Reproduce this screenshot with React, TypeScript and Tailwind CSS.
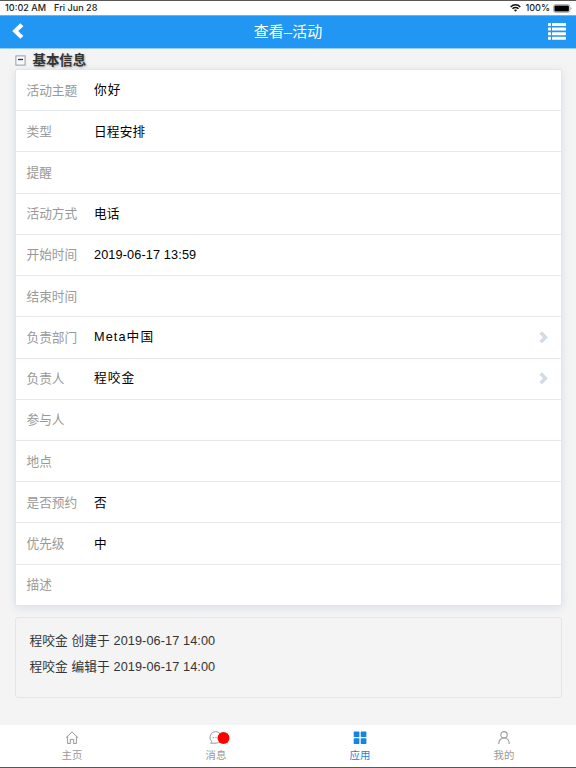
import clsx from 'clsx'
import { FC, ReactNode } from 'react'

type Field = {
  label: string
  value?: string
  spaced?: boolean
  link?: boolean
}

const fields: Field[] = [
  { label: '活动主题', value: '你好', spaced: true },
  { label: '类型', value: '日程安排' },
  { label: '提醒' },
  { label: '活动方式', value: '电话' },
  { label: '开始时间', value: '2019-06-17 13:59' },
  { label: '结束时间' },
  { label: '负责部门', value: 'Meta中国', spaced: true, link: true },
  { label: '负责人', value: '程咬金', spaced: true, link: true },
  { label: '参与人' },
  { label: '地点' },
  { label: '是否预约', value: '否' },
  { label: '优先级', value: '中' },
  { label: '描述' },
]

const StatusBar: FC = () => (
  <div className="flex h-[15px] shrink-0 items-center justify-between border-t border-[#58585a] bg-white pr-[4px] pl-[5px] font-['Inter',sans-serif] text-[9.1px] leading-none font-medium text-[#1c1c1c]">
    <div className="flex gap-[8px]">
      <span>10:02 AM</span>
      <span>Fri Jun 28</span>
    </div>
    <div className="flex items-center">
      <svg className="mr-[4px] h-[8px] w-[11px]" viewBox="0 0 11 8" fill="none" stroke="#111" strokeWidth="1.5">
        <path d="M.7 2.9C3.4.1 7.6.1 10.3 2.9M2.5 4.8c1.7-1.7 4.3-1.7 6 0" />
        <path d="M3.9 6.1c.9-.9 2.3-.9 3.2 0L5.5 7.8z" fill="#111" stroke="none" />
      </svg>
      <span className="mr-[3px]">100%</span>
      <svg className="h-[9px] w-[19px]" viewBox="0 0 19 9">
        <rect x=".5" y=".5" width="16.3" height="8" rx="2" fill="#fff" stroke="#a3a3a3" strokeWidth=".8" />
        <rect x="1.4" y="1.4" width="14.5" height="6.2" rx="1" fill="#000" />
        <path d="M17.6 3v3c1.2-.5 1.2-2.5 0-3z" fill="#999" />
      </svg>
    </div>
  </div>
)

const Header: FC = () => (
  <div className="flex h-[34px] shrink-0 items-center justify-between border-t border-b border-t-[#67b5f7] border-b-[#9ccdf8] bg-[#2196f3] pr-[10px] pl-[12px] text-white">
    <svg className="h-[16px] w-[18px] -translate-y-px" viewBox="0 0 18 16">
      <path d="M8.3.3 11.4 3.2 6.2 8l5.2 4.9-3.1 2.8L.3 8z" fill="#fff" />
    </svg>
    <span className="-translate-x-px text-[15px]">查看–活动</span>
    <svg className="h-[17px] w-[18px] -translate-y-px" viewBox="0 0 18 17" fill="#fff">
      {[0, 4.6, 9.2, 13.8].map((y) => (
        <g key={y}>
          <rect x="0" y={y} width="3" height="3" rx=".5" />
          <rect x="4" y={y} width="14" height="3" rx=".5" />
        </g>
      ))}
    </svg>
  </div>
)

const FieldRow: FC<Field> = ({ label, value, spaced, link }) => (
  <div className="flex flex-1 items-center border-b border-[#e5e8f0] pt-[2px] pr-[13px] pl-[11px] last:border-b-0">
    <span className="w-[67.5px] text-[12.7px] text-[#999]">{label}</span>
    <span
      className={clsx(
        'flex-1 text-[12.7px] text-black',
        spaced ? '-translate-y-px tracking-[1.1px]' : 'tracking-[0.13px]'
      )}
    >
      {value}
    </span>
    {link && (
      <svg className="h-[13px] w-[9px] -translate-y-px" viewBox="0 0 9 13">
        <path d="M3 .3 8.8 6.3 3 12.4.4 10l3.5-3.7L.4 2.7z" fill="#d3dbe4" />
      </svg>
    )}
  </div>
)

const Tab: FC<{ label: string; active?: boolean; children: ReactNode }> = ({ label, active, children }) => (
  <div
    className={clsx(
      'flex flex-1 flex-col items-center pt-[5px] text-[10.4px] leading-[15px]',
      active ? 'text-[#1585df]' : 'text-[#999]'
    )}
  >
    <div className="relative mb-[3px] h-[15px] w-[15px] -translate-x-[0.5px]">{children}</div>
    <span>{label}</span>
  </div>
)

const TabBar: FC = () => (
  <div className="flex h-[43px] shrink-0 border-b border-[#58585a] bg-white">
    <Tab label="主页">
      <svg viewBox="0 0 15 15" fill="none" stroke="currentColor" strokeLinejoin="round" strokeLinecap="round">
        <path d="M1.7 7.5 7.5 1.9l5.8 5.6M3.1 6.4v7.1h2.7V9.4h3.4v4.1h2.7V6.4" />
      </svg>
    </Tab>
    <Tab label="消息">
      <svg viewBox="0 0 15 15" fill="none" stroke="currentColor" strokeLinejoin="round">
        <path d="M3.2 11.5A5.8 5.8 0 1 1 7.5 13.2H2.1c.6-.4 1-.9 1.1-1.7z" />
        <path d="M4.2 7.6h1.4M6.8 7.6h1.4M9.4 7.6h1.4" />
      </svg>
      <span className="absolute top-[1.5px] left-[9px] h-[12px] w-[12px] rounded-full bg-[#f00]" />
    </Tab>
    <Tab label="应用" active>
      <svg viewBox="0 0 15 15" fill="currentColor">
        <rect x="1.2" y="1.4" width="5.7" height="5.7" rx=".6" />
        <rect x="8.2" y="1.4" width="5.7" height="5.7" rx=".6" />
        <rect x="1.2" y="8.2" width="5.7" height="5.7" rx=".6" />
        <rect x="8.2" y="8.2" width="5.7" height="5.7" rx=".6" />
      </svg>
    </Tab>
    <Tab label="我的">
      <svg viewBox="0 0 15 15" fill="none" stroke="currentColor" strokeWidth="1.1" strokeLinecap="round">
        <circle cx="7.5" cy="4.8" r="3.2" />
        <path d="M2.3 13.4c0-3.2 2.2-5.4 5.2-5.4s5.2 2.2 5.2 5.4" />
      </svg>
    </Tab>
  </div>
)

export default function App() {
  return (
    <div className="flex h-[768px] w-[576px] flex-col overflow-hidden bg-[#f4f4f4] font-['Liberation_Sans','Noto_Sans_CJK_SC',sans-serif]">
      <StatusBar />
      <Header />
      <div className="flex-1 px-[14.5px]">
        <div className="flex h-[20px] items-center gap-[7px] pt-[3px]">
          <svg className="h-[11px] w-[11px]" viewBox="0 0 11 11">
            <rect x=".9" y=".9" width="9.2" height="9.2" fill="#f8f9fb" stroke="#8793a3" strokeWidth=".9" />
            <path d="M3 4.5h5" stroke="#183452" strokeWidth="1.3" />
          </svg>
          <span className="text-[13.4px] leading-[18px] font-bold text-[#333] [text-shadow:1px_1px_2px_#aaa]">
            基本信息
          </span>
        </div>
        <div className="flex h-[536.8px] flex-col rounded-[2px] border border-[#e1e6ee] bg-white shadow-[0_2px_9px_rgba(110,130,170,0.18)]">
          {fields.map((field) => (
            <FieldRow key={field.label} {...field} />
          ))}
        </div>
        <div className="mt-[11px] h-[81px] rounded-[3px] border border-[#e5e5e5] px-[14px] pt-[11.5px] text-[12.7px] leading-[25.4px] tracking-[0.1px] text-[#333]">
          <p>程咬金 创建于 2019-06-17 14:00</p>
          <p>程咬金 编辑于 2019-06-17 14:00</p>
        </div>
      </div>
      <TabBar />
    </div>
  )
}
